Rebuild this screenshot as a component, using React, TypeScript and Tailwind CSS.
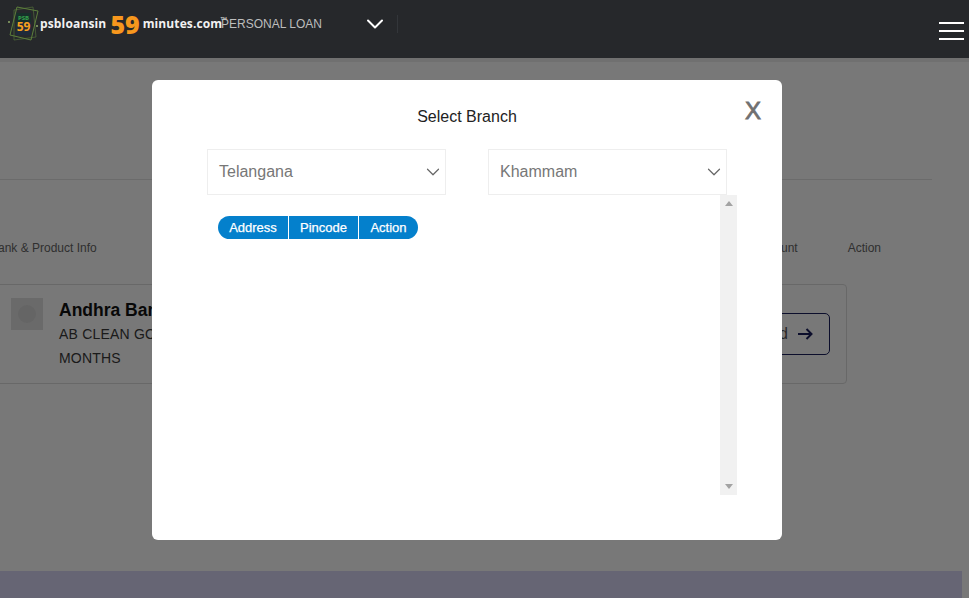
import { ChevronDown } from "lucide-react";

function Logo() {
  return (
    <svg width="32" height="36" viewBox="0 0 32 36" className="shrink-0">
      <g fill="none" stroke="#5d7f3c" strokeWidth="1">
        <path d="M10 1 L31 5 L24 34 L3 29 Z" />
        <path d="M7 4 L26 1 L29 31 L7 34 Z" strokeOpacity="0.55" />
      </g>
      <rect x="9" y="7" width="15" height="22" fill="#1f2a3a" />
      <rect x="9" y="7" width="15" height="9" fill="#17302a" />
      <text x="16.5" y="13.5" textAnchor="middle" fontSize="6" fontWeight="700" fill="#35a24a" fontFamily="'Open Sans', sans-serif">PSB</text>
      <text x="16.5" y="24.5" textAnchor="middle" fontSize="12" fontWeight="700" fill="#f7a11d" fontFamily="'Open Sans', sans-serif">59</text>
      <circle cx="2" cy="16" r="1" fill="#8fa86a" />
      <circle cx="30" cy="20" r="1" fill="#8fa86a" />
    </svg>
  );
}

function Select({ label }: { label: string }) {
  return (
    <div className="flex h-[46px] w-[239px] items-center justify-between border border-[#eeeeee] pl-[11px] pr-[1px] text-[16px] text-[#777777]">
      <span>{label}</span>
      <ChevronDown size={22} strokeWidth={1.3} className="text-[#666666]" />
    </div>
  );
}

export default function App() {
  return (
    <div className="relative h-[598px] w-[969px] overflow-hidden bg-white font-['Liberation_Sans',Arial,sans-serif]">
      <header className="relative z-20 flex h-[58px] items-start bg-[#26282b]">
        <div className="ml-[7px] mt-[6px] flex items-center">
          <Logo />
          <span className="ml-px font-['Open_Sans',sans-serif] text-[12px] font-bold tracking-[0.15px] text-[#f2f2f2]">psbloansin</span>
          <span className="ml-[4px] font-['Open_Sans',sans-serif] text-[25px] leading-[30px] font-extrabold text-[#f7971d]">59</span>
          <span className="ml-[3px] font-['Open_Sans',sans-serif] text-[12px] font-bold tracking-[0.1px] text-[#f2f2f2]">minutes.com</span>
          <span className="-ml-[2px] mb-[10px] text-[7px] leading-none text-[#f2f2f2]">™</span>
        </div>
        <span className="-ml-[6px] mt-[17px] text-[12px] leading-[14px] text-[#bdbdbd]">PERSONAL LOAN</span>
        <ChevronDown size={28} strokeWidth={1.7} className="ml-[39px] mt-[10px] text-white" />
        <div className="ml-[8px] mt-[15px] h-[18px] w-px bg-[#33363a]" />
        <div className="ml-auto mr-[5px] mt-[22px] flex w-[25px] flex-col gap-[6px]">
          <div className="h-[2px] bg-white" />
          <div className="h-[2px] bg-white" />
          <div className="h-[2px] bg-white" />
        </div>
      </header>

      <main className="bg-white">
        <div className="h-[122px] w-[932px] border-b border-[#e4e4e4]">
          <div className="h-[4px] w-[969px] bg-[#eeeeee]" />
        </div>
        <div className="mr-[88px] mt-[61px] flex justify-between text-[12px] leading-[14px] text-[#666666]">
          <span className="-ml-[10px]">Bank &amp; Product Info</span>
          <div className="flex gap-[50px]">
            <span>Amount</span>
            <span>Action</span>
          </div>
        </div>
        <div className="-ml-[10px] mt-[29px] flex h-[100px] w-[857px] items-center justify-between rounded-[4px] border border-[#dddddd] pl-[20px] pr-[16px]">
          <div className="flex items-start self-start pt-[13px]">
            <div className="flex h-[32px] w-[32px] items-center justify-center bg-[#e2e2e2]">
              <div className="h-[18px] w-[18px] rounded-full bg-[#d6d6d6]" />
            </div>
            <div className="ml-[16px]">
              <div className="text-[17.5px] leading-[24px] font-bold text-[#111111]">Andhra Bank</div>
              <div className="text-[14px] leading-[24px] tracking-[0.2px] text-[#3a3a3a]">AB CLEAN GOLD LOAN 12<br />MONTHS</div>
            </div>
          </div>
          <div className="flex h-[42px] w-[130px] items-center justify-end gap-[10px] rounded-[5px] border border-[#1b1f5e] pr-[16px] text-[16px]">
            <span className="text-[#565656]">Proceed</span>
            <svg width="15" height="12" viewBox="0 0 15 12" fill="none" stroke="#1b1f5e" strokeWidth="2" className="shrink-0">
              <path d="M0 6H13.5" />
              <path d="M8.5 1L13.5 6L8.5 11" />
            </svg>
          </div>
        </div>
        <div className="mt-[187px] h-[27px] w-[962px] bg-[#d8d6f6]" />
      </main>

      <div className="absolute inset-x-0 bottom-0 top-[58px] z-10 bg-black/[0.53]" />

      <div className="absolute left-[152px] top-[80px] z-30 h-[460px] w-[630px] rounded-[6px] bg-white">
        <div className="relative pt-[27px] text-center text-[16px] leading-[19px] text-[#222222]">
          Select Branch
          <span className="absolute right-[21px] top-[17px] text-[24px] leading-[28px] text-[#707070] [-webkit-text-stroke:0.8px_#707070]">X</span>
        </div>
        <div className="ml-[55px] mt-[23px] flex w-[520px] justify-between">
          <Select label="Telangana" />
          <Select label="Khammam" />
        </div>
        <div className="ml-[55px] flex h-[300px] w-[530px] items-start justify-between">
          <div className="ml-[11px] mt-[21px] flex h-[23px] w-[200px] gap-px overflow-hidden rounded-[12px] text-center text-[13px] leading-[23px] text-white [-webkit-text-stroke:0.25px_#ffffff] [&>div]:bg-[#0480cc]">
            <div className="w-[70px]">Address</div>
            <div className="w-[69px]">Pincode</div>
            <div className="w-[59px]">Action</div>
          </div>
          <div className="flex h-full w-[17px] flex-col items-center justify-between bg-[#f1f1f1] py-[6px]">
            <div className="h-0 w-0 border-x-[4px] border-b-[5px] border-x-transparent border-b-[#a3a3a3]" />
            <div className="h-0 w-0 border-x-[4px] border-t-[5px] border-x-transparent border-t-[#a3a3a3]" />
          </div>
        </div>
      </div>
    </div>
  );
}
